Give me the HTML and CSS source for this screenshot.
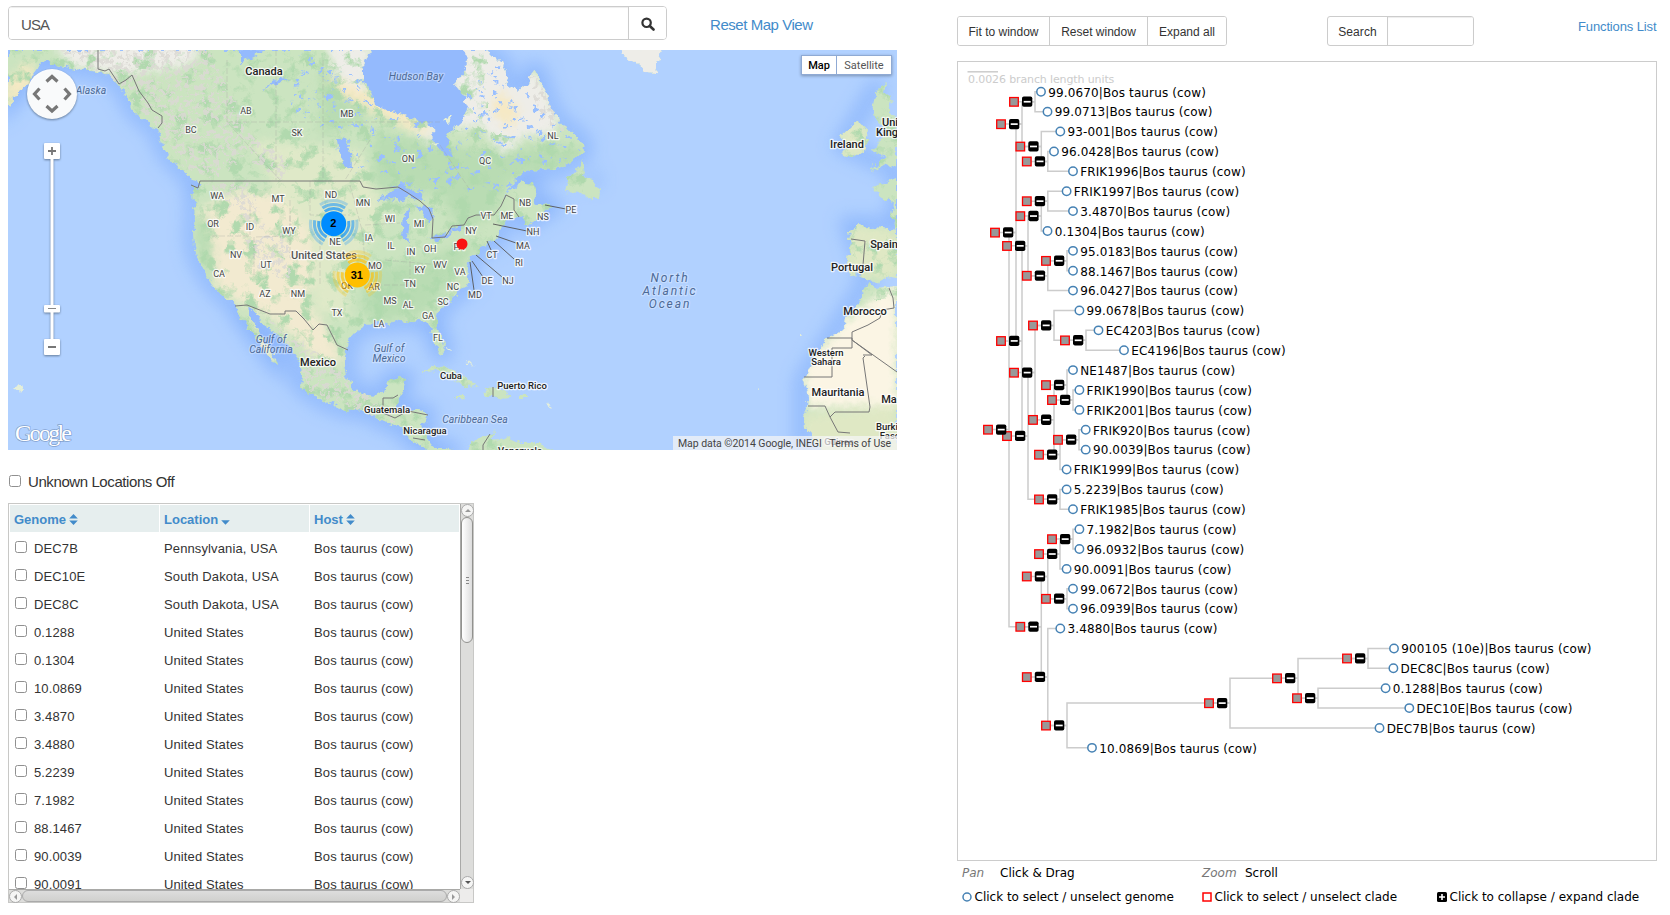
FILE: index.html
```html
<!DOCTYPE html>
<html lang="en">
<head>
<meta charset="utf-8">
<title>Genome Map</title>
<link rel="stylesheet" href="styles.css">
</head>
<body>
<div class="page">
  <div class="left">
    <div class="searchrow">
      <div class="group"><input class="query" type="text" value="USA"><button class="go" aria-label="Search"><svg width="14" height="14" viewBox="0 0 14 14"><circle cx="5.6" cy="5.8" r="4.2" fill="none" stroke="#333" stroke-width="2.2"/><path d="M8.8 9l3.7 3.5" stroke="#333" stroke-width="2.6" stroke-linecap="round"/></svg></button></div>
      <a class="reset">Reset Map View</a>
    </div>
    <div class="map">
      <svg id="map" width="889" height="400" viewBox="8 50 889 400" color-interpolation-filters="sRGB">
        <defs>
          <filter id="soft" x="-20%" y="-20%" width="140%" height="140%"><feGaussianBlur stdDeviation="5"/></filter>
          <filter id="shore" x="-10%" y="-10%" width="120%" height="120%"><feGaussianBlur stdDeviation="9"/></filter>
          <filter id="rough" x="0" y="0" width="100%" height="100%"><feTurbulence type="fractalNoise" baseFrequency=".16" numOctaves="3" seed="4" result="n"/><feDisplacementMap in="SourceGraphic" in2="n" scale="8" xChannelSelector="R" yChannelSelector="G"/></filter>
          <filter id="peaks" x="0" y="0" width="100%" height="100%"><feTurbulence type="fractalNoise" baseFrequency=".2" numOctaves="4" seed="8" result="n"/><feColorMatrix in="n" values="0 0 0 0 .86  0 0 0 0 .85  0 0 0 0 .83  9 0 0 0 -4.6" result="m"/><feComposite in="m" in2="SourceAlpha" operator="in"/></filter>
          <filter id="woods" x="0" y="0" width="100%" height="100%"><feTurbulence type="fractalNoise" baseFrequency=".07" numOctaves="4" seed="21" result="n"/><feColorMatrix in="n" values="0 0 0 0 .69  0 0 0 0 .85  0 0 0 0 .68  0 5 0 0 -2.600" result="m"/><feComposite in="m" in2="SourceAlpha" operator="in"/></filter>
          <filter id="lakes" x="0" y="0" width="100%" height="100%"><feTurbulence type="fractalNoise" baseFrequency=".13 .17" numOctaves="3" seed="33" result="n"/><feColorMatrix in="n" values="0 0 0 0 .6  0 0 0 0 .75  0 0 0 0 1  0 0 14 0 -9" result="m"/><feComposite in="m" in2="SourceAlpha" operator="in"/></filter>
          <filter id="drop" x="-30%" y="-30%" width="160%" height="160%"><feDropShadow dx="0" dy="1" stdDeviation="1.2" flood-color="#234" flood-opacity=".55"/></filter>
          <clipPath id="land"><path id="america" d="M8 50V106L16 97 23 88 30 79 37 70 41 63 47 59 52 63 60 66 76 69 92 71 103 73 112 77 118 84 123 90 128 98 131 107 138 115 147 122 157 129 160 138 163 148 168 156 175 163 182 171 191 179 200 184 199 188 193 186 194 205 195 218 193 233 194 246 197 258 203 270 210 281 217 290 224 296 231 301 235 307 240 318 247 326 254 336 260 344 267 353 274 363 278 366 276 359 270 350 263 339 257 328 251 318 247 309 253 311 259 319 264 326 276 334 286 343 296 356 301 365 302 376 301 386 309 392 321 400 336 406 346 410 355 411 363 410 372 415 381 421 391 424 401 427 407 436 413 442 421 445 430 452 458 452 446 448 434 448 428 440 423 430 422 424 427 418 427 413 418 410 408 411 398 409 396 403 401 395 406 378 400 376 390 379 385 390 375 396 362 394 353 388 347 375 345 365 347 350 348 340 355 332 365 326 378 321 385 324 393 322 400 320 410 322 420 320 428 323 433 335 437 347 442 354 445 350 443 342 438 330 436 320 438 312 447 303 455 295 463 288 470 284 468 275 467 265 470 258 478 252 480 247 490 243 498 240 497 234 502 225 510 219 521 215 527 224 540 214 553 207 548 203 537 205 534 200 536 190 530 182 522 182 510 191 504 198 514 182 524 172 540 170 555 169 567 165 577 157 584 152 583 143 575 133 563 126 555 115 549 104 545 92 538 72 533 70 528 83 518 91 508 84 505 70 502 62 493 57 486 50Z"/><path d="M584 159L577 170 566 182 564 192 582 193 592 199 599 199 600 190 593 180 583 177 584 166ZM524 225L536 213 548 208 540 217 528 226ZM422 372L433 366 445 367 456 374 467 378 477 386 466 387 454 379 438 371ZM484 389L492 387 503 390 511 396 499 399 493 396 485 396ZM456 396H467L463 399H458ZM518 396H527V398H518ZM467 452L474 440 484 436 494 431 490 441 500 440 507 437 520 443 541 443 544 447 556 452ZM620 48L626 58 636 63 646 72 655 73 657 63 662 48ZM842 134L856 122 868 128 866 147 852 158 842 156 847 145 840 140ZM872 109L876 92 886 82 884 94 892 99 889 112 897 118V168L886 163 871 172 877 162 886 157 872 151 880 142 886 132 878 121ZM873 187L885 183 897 178V234L892 218 894 204 880 196ZM849 232L857 225 897 230V278L888 277 876 283 868 279 859 274 850 275 848 260 851 245ZM869 283L875 288 897 286V452H823L812 436 804 427 803 418 807 408 808 393 804 380 811 365 820 351 827 338 838 334 845 327 846 318 855 310 860 298Z"/></clipPath>
        </defs>
        <rect x="8" y="50" width="889" height="400" fill="#b1d1ff"/>
        <g filter="url(#shore)" fill="none" stroke="#84b0fb" stroke-width="15" opacity=".8"><use href="#america"/><path d="M803 452V380L868 280 849 225 897 225V170L842 145 880 82M590 180H600"/></g>
        <g filter="url(#rough)">
          <g clip-path="url(#land)">
            <rect x="8" y="50" width="900" height="402" fill="#cbe4c0"/>
            <g filter="url(#soft)">
              <path fill="#f2ead0" d="M195 215L235 190 300 195 318 215 320 270 305 300 325 325 345 365 318 360 275 320 235 300 215 285 203 250ZM240 315L290 365 260 350Z"/>
              <path fill="#dfe9c8" d="M250 140L360 150 375 185 385 220 345 280 350 320 315 310 310 230 275 190Z"/>
              <path fill="#b9dcb3" d="M375 130L440 145 480 150 580 145 580 165 510 180 495 215 460 230 440 195 370 185ZM195 215L210 220 215 285 200 260ZM420 260L480 240 430 310 375 325 360 305 370 270ZM320 135L365 120 360 70 320 70Z"/>
              <path fill="#eeede8" d="M325 40H370L365 95 440 125 435 145 410 130 375 110 335 75ZM450 40H500L545 85 560 125 548 135 525 135 505 155 480 125 455 130ZM610 40H670V80H620ZM55 42H205L190 65 125 75 70 66Z"/>
              <path fill="#f6e9c4" d="M8 80L30 60 35 80 8 110ZM325 75L410 110 435 135 405 128 340 95ZM490 110L510 130 520 110 500 90Z"/>
              <path fill="#fbf5e4" d="M897 280V405L808 408 803 370 845 320 872 300Z"/>
              <path fill="#dfe8c4" d="M803 415L897 405V455H803ZM848 225L897 230V278L848 275ZM840 120L868 125V155L840 158Z"/>
            </g>
            <g filter="url(#woods)"><rect x="8" y="50" width="480" height="402" opacity=".99"/><path d="M480 135H600V452H480Z"/><rect x="840" y="50" width="58" height="250"/></g>
            <g filter="url(#peaks)" opacity=".85"><path d="M60 50H210L230 90 250 135 290 160 280 180 245 155 215 180 180 165 155 128 120 84ZM205 185L250 180 265 230 240 215ZM245 240L290 230 290 280 260 270ZM270 320L340 370 400 425 360 412 310 390ZM530 70L555 110 570 135 540 120Z"/></g>
            <g filter="url(#lakes)"><path d="M300 50L362 80 430 130 500 60 580 150 500 195 400 190 350 170 325 130 290 110Z"/></g>
          </g>
          <g fill="#94bafd">
            <path d="M371 48L363 68 363 82 371 90 374 104 391 111 403 114 417 121 433 126 434 143 443 155 452 157 449 146 447 137 455 127 464 119 468 107 462 94 454 84 466 70 465 48Z"/>
            <path d="M377 200L389 193 400 184 411 189 422 194 424 201 411 197 400 201 391 199ZM403 214L409 211 409 223 407 235 408 241 403 241 402 226ZM414 207L425 205 431 210 433 219 430 224 421 211ZM428 239L441 234 453 230 449 236 434 241ZM449 229L463 225 462 229 453 232ZM337 140L344 137 350 153 351 168 345 166 339 153ZM240 50H263L255 56 240 63ZM262 88L278 78 290 79 274 85ZM247 309L260 315 258 330Z"/>
          </g>
          <g fill="#e5efd9"><path d="M18 384l4 3-3 5-5-4zM443 120l8-4-2 8zM432 144l7-1-4 5zM448 347l3 3-2 2zM465 359l10 8-6-3zM547 400l4 8-3-2zM758 387l2 2-2 1zM801 333l2 3-3 0z"/></g>
        </g>
        <path class="province" d="M227 60V122L280 180M227 122H440M276 50V180M323 60V180M250 205V236H212M290 200V236L254 237V275M310 181V215H350M290 215V258H320M350 185L362 230 365 260M320 230V285M365 225L400 223M360 285H410M410 245V290M440 145L470 190M385 260L440 265M370 140L345 180"/>
        <path class="border" d="M98 50V69L105 71 109 69 119 84 126 80 132 75 139 91 148 103 152 110 162 116V123L158 128M191 185L198 188 200 181H360L363 187 376 189 398 187 408 193 420 201 429 209 433 219 432 238 445 237 452 226 464 225 468 218 476 215H494L501 206 506 195 514 199V210L519 217M235 306L247 305 270 314H285V311H296L304 319 313 330 319 324 327 325 337 345 348 350M383 413V398H393L398 395M383 413L395 418 408 411 428 415M413 438L425 440M490 434L483 445 483 452M493 387V397M897 372L852 340V332L868 325 880 318 882 310 894 308 893 298 889 288M827 338H852V348H832V377H804M865 356L863 358 870 407 869 412H835L830 417 825 406H808M852 340L872 355H863M830 417L838 432 850 433M851 239L865 241 863 265 868 270"/>
        <path class="leader" d="M545 205L566 209M493 224L527 231M496 236L516 243M487 241L491 250M494 241L514 259M476 255L502 277M472 261L483 277M470 262L474 290"/>
        <g id="labels"></g>
        <circle cx="462" cy="244" r="5.5" fill="#f91212"/>
        <g id="clusters"></g>
        <g filter="url(#drop)"><circle cx="52" cy="94" r="25" fill="#fff" fill-opacity=".96"/></g>
        <g fill="none" stroke="#777" stroke-width="3.2"><path d="M46.5 81.5L52 76.5 57.5 81.5M46.5 106L52 111 57.5 106M39.5 88.5L34.5 94 39.5 99.500M64.500 88.500L69.500 94 64.500 99.500"/></g>
        <g filter="url(#drop)" fill="#fff"><rect x="50.500" y="158" width="3" height="182"/><rect x="44" y="143" width="16" height="16" rx="1"/><rect x="44" y="305" width="16" height="7.500" rx="1"/><rect x="44" y="339" width="16" height="16" rx="1"/></g>
        <path d="M48 151H56M52 147V155M48 347H56" stroke="#777" stroke-width="1.800"/><path d="M48 308.500H56" stroke="#888"/>
        <text class="logo" x="15" y="441" textLength="57">Google</text>
      </svg>
      <div class="types"><b>Map</b><span>Satellite</span></div>
      <div class="credit"><span>Map data ©2014 Google, INEGI</span><span>Terms of Use</span></div>
    </div>
    <label class="unknown"><input type="checkbox"><span>Unknown Locations Off</span></label>
    <div class="grid">
      <div class="clip">
        <div class="row head">
          <div>Genome <svg width="9" height="11" viewBox="0 0 9 11"><path d="M4.500 0L8.800 4.600H.2ZM.2 6.400H8.800L4.500 11Z" fill="#428bca"/></svg></div>
          <div>Location <svg width="9" height="11" viewBox="0 0 9 11"><path d="M.2 6.200H8.800L4.500 10.800Z" fill="#428bca"/></svg></div>
          <div>Host <svg width="9" height="11" viewBox="0 0 9 11"><path d="M4.500 0L8.800 4.600H.2ZM.2 6.400H8.800L4.500 11Z" fill="#428bca"/></svg></div>
        </div>
        <div id="rows"></div>
      </div>
      <div class="vbar"><div class="btn"><i class="up"></i></div><div class="thumb"><i></i><i></i><i></i></div><div class="btn low"><i class="down"></i></div></div>
      <div class="hbar"><div class="btn"><i class="lt"></i></div><div class="thumb"></div><div class="btn"><i class="rt"></i></div></div>
      <div class="corner"></div>
    </div>
  </div>
  <div class="right">
    <div class="tools">
      <div class="buttons"><button>Fit to window</button><button>Reset window</button><button>Expand all</button></div>
      <div class="find"><span>Search</span><input type="text"></div>
      <a class="functions">Functions List</a>
    </div>
    <div class="tree"><svg id="tree" width="698" height="798" viewBox="958 62 698 798"></svg></div>
    <div class="hints"><em>Pan</em><span>Click &amp; Drag</span><em>Zoom</em><span>Scroll</span></div>
    <div class="legend">
      <div><svg width="10" height="10"><circle cx="5" cy="5" r="4" fill="#fff" stroke="#4682b4" stroke-width="1.500"/></svg>Click to select / unselect genome</div>
      <div><svg width="10" height="10"><rect x="1" y="1" width="8" height="8" fill="#fff" stroke="red" stroke-width="1.500"/></svg>Click to select / unselect clade</div>
      <div><svg width="10" height="10"><rect width="10" height="10" rx="1.500"/><path d="M2 5H8M5 2V8" stroke="#fff" stroke-width="1.600"/></svg>Click to collapse / expand clade</div>
    </div>
  </div>
</div>
<script src="app.js"></script>
</body>
</html>
```

FILE: styles.css
```css
* { box-sizing: border-box; }
body { margin: 0; background: #fff; color: #333; font-family: "Liberation Sans", Arial, sans-serif; }
a { color: #428bca; text-decoration: none; }
button, input { font-family: inherit; }
.page { display: flex; width: 1670px; height: 915px; overflow: hidden; }
.left { width: 957px; padding: 6px 0 0 8px; }
.right { width: 713px; }

.searchrow { display: flex; align-items: center; height: 34px; }
.group { display: flex; width: 659px; height: 34px; border: 1px solid #ccc; border-radius: 4px; overflow: hidden; }
.query { flex: 1; border: 0; padding: 3px 12px 0; font-size: 15px; letter-spacing: -.9px; color: #555; box-shadow: inset 0 1px 1px rgba(0,0,0,.075); outline: 0; }
.go { width: 38px; border: 0; border-left: 1px solid #ccc; background: #fff; padding: 5px 0 0; }
.reset { margin-left: 43px; padding-top: 2px; font-size: 15px; letter-spacing: -.45px; }

.map { position: relative; width: 889px; height: 400px; margin-top: 10px; overflow: hidden; }
.map svg { display: block; }
.map text { font-family: Roboto, sans-serif; paint-order: stroke; stroke: #fff; stroke-opacity: .75; stroke-width: 2.5px; stroke-linejoin: round; text-anchor: middle; }
.map .st { font-size: 9px; fill: #444; }
.map .co { font-size: 11px; font-weight: 500; fill: #222; }
.map .sm { font-size: 9.5px; font-weight: 500; fill: #222; }
.map .us { font-size: 11px; font-weight: 500; fill: #555; }
.map .sea { font-size: 10.5px; font-style: italic; fill: #4d6a96; stroke-opacity: .3; }
.map .ocean { font-size: 12px; font-style: italic; fill: #4d6a96; letter-spacing: 1.9px; stroke-opacity: .3; }
.map .num { font: bold 11px "Liberation Sans", sans-serif; fill: #000; stroke: none; }
.map .logo { font: 24px "Liberation Serif", serif; fill: #fff; stroke: #6d8bb8; stroke-opacity: .7; stroke-width: 1.5px; text-anchor: start; }
.border { fill: none; stroke: #777; stroke-width: 1; }
.leader { fill: none; stroke: #555; stroke-width: .9; }
.province { fill: none; stroke: #9a9a9a; stroke-opacity: .4; stroke-width: .7; stroke-dasharray: 6 2; }
.types { position: absolute; top: 5px; right: 5px; display: flex; height: 20px; border: 1px solid #8faad4; background: #fff; font: 11px/19px Roboto, sans-serif; box-shadow: 0 1px 3px rgba(0,0,0,.3); }
.types b { width: 34px; text-align: center; color: #000; font-weight: 500; }
.types span { width: 55px; text-align: center; border-left: 1px solid #8faad4; color: #555; }
.credit { position: absolute; right: 0; bottom: 0; width: 224px; height: 14px; padding: 1px 6px 0 5px; display: flex; justify-content: space-between; background: rgba(245,245,245,.72); font: 10.5px/14px Roboto, sans-serif; letter-spacing: -.06px; color: #444; white-space: nowrap; }

input[type=checkbox] { appearance: none; width: 12px; height: 12px; margin: 0; border: 1px solid #909090; border-radius: 2.5px; background: #fff; flex: none; }
.unknown { display: flex; align-items: center; height: 20px; margin: 21px 0 0 1px; gap: 7px; font-size: 15px; letter-spacing: -.41px; }

.grid { display: grid; grid-template: 385px 13px / 451px 13px; width: 466px; height: 400px; margin-top: 12px; border: 1px solid #c8c8c6; }
.clip { overflow: hidden; padding: 1px 1px 0; }
.row { display: grid; grid-template-columns: repeat(3, 149px); column-gap: 1px; height: 28px; font-size: 13px; letter-spacing: .12px; }
.row > div { padding-left: 4px; display: flex; align-items: center; white-space: nowrap; }
.row input { margin: -3px 7px 0 1px; }
.head { height: 27px; margin-bottom: 2px; font-weight: bold; color: #428bca; letter-spacing: 0; }
.head > div { background: #e6eeee; padding-top: 2px; gap: 3px; }
.vbar, .hbar { display: flex; background: #dddddb; border: 0 solid #a9a9a7; }
.vbar { flex-direction: column; border-left-width: 1px; }
.hbar { border-top-width: 1px; }
.btn { display: flex; align-items: center; justify-content: center; flex: none; width: 13px; height: 13px; border: 1px solid #aaa; border-radius: 7px; background: #f5f5f4; }
.thumb { border: 1px solid #92928f; border-radius: 7px; }
.vbar .thumb { height: 126px; background: linear-gradient(90deg, #fff, #ddd); display: flex; flex-direction: column; align-items: center; justify-content: center; gap: 2px; }
.thumb i { width: 3px; height: 1px; background: #888; }
.vbar .low { margin-top: auto; }
.hbar .thumb { flex: 1; background: linear-gradient(#ddd, #d0d0ce); border-color: #aaa; }
.btn i { border: 3px solid transparent; }
.btn .up { border-top: 0; border-bottom-color: #999; }
.btn .down { border-bottom: 0; border-top-color: #555; }
.btn .lt { border-left: 0; border-right-color: #999; }
.btn .rt { border-right: 0; border-left-color: #999; }
.corner { background: #edeceb; }

.tools { display: flex; align-items: flex-start; height: 61px; padding-top: 16px; }
.buttons, .find { display: flex; height: 30px; border: 1px solid #ccc; border-radius: 3px; overflow: hidden; font-size: 12px; }
.buttons { width: 270px; }
.buttons button { border: 0; border-right: 1px solid #ccc; padding: 1px 0 0; background: #fff; color: #333; font-size: 12px; width: 92px; }
.buttons button:nth-child(2) { width: 98px; }
.buttons button:last-child { border-right: 0; width: 78px; }
.find { width: 147px; margin-left: 100px; }
.find span { width: 60px; text-align: center; line-height: 30px; border-right: 1px solid #ccc; letter-spacing: .1px; }
.find input { width: 85px; border: 0; box-shadow: inset 0 1px 1px rgba(0,0,0,.075); }
.functions { width: 79px; margin: 3px 0 0 104px; font-size: 13px; letter-spacing: -.13px; white-space: nowrap; }

.tree { width: 700px; height: 800px; border: 1px solid #ccc; }
.tree svg { display: block; }
.tree path { fill: none; stroke: #ccc; stroke-width: 1.5; }
.tree text { font: 12px "DejaVu Sans", sans-serif; fill: #000; letter-spacing: .13px; }
.tree .scale { font-size: 11px; fill: #ccc; letter-spacing: -.12px; }
.tree .minus { stroke: #fff; stroke-width: 1.7; }
.hints, .legend { font: 12px/16px "DejaVu Sans", sans-serif; color: #000; }
.hints { display: grid; grid-template-columns: 38px 202px 43px 100px; padding-left: 5px; margin-top: 4px; }
.hints em { color: #777; }
.legend { display: grid; grid-template-columns: 240px 235px 220px; padding-left: 5px; margin-top: 8px; white-space: nowrap; }
.legend div { display: flex; align-items: center; gap: 2.5px; }
```

FILE: app.js
```js
const H = " (cow)";
const rows = [["DEC7B", "Pennsylvania, USA"], ["DEC10E", "South Dakota, USA"], ["DEC8C", "South Dakota, USA"]].concat(
  ["0.1288", "0.1304", "10.0869", "3.4870", "3.4880", "5.2239", "7.1982", "88.1467", "90.0039", "90.0091"].map(g => [g, "United States"]));
document.getElementById("rows").innerHTML = rows.map(r =>
  `<div class="row"><div><input type="checkbox">${r[0]}</div><div>${r[1]}</div><div>Bos taurus${H}</div></div>`).join("");

// Map labels: class, then "text,x,baseline" entries
const labels = {
  st: "AB,246,114|BC,191,133|SK,297,136|MB,347,117|ON,408,162|QC,485,164|NL,553,139|WA,217,199|MT,278,202|ND,331,198|MN,363,206|OR,213,227|ID,250,230|WY,289,234|WI,390,222|MI,419,227|VT,486,219|ME,507,219|NB,525,206|PE,571,213|NS,543,220|NY,471,234|NH,533,235|MA,523,249|CT,492,258|RI,519,266|PA,459,250|NE,335,245|IA,369,241|IL,391,249|IN,411,255|OH,430,252|NV,236,258|UT,266,268|CA,219,277|AZ,265,297|NM,298,297|MO,375,269|KY,420,273|WV,440,268|VA,460,275|TN,410,287|NC,453,290|OK,347,289|AR,374,290|MS,390,304|AL,408,308|SC,443,305|TX,337,316|LA,379,327|GA,428,319|FL,438,341|DE,487,284|NJ,508,284|MD,475,298",
  co: "Canada,264,75|Mexico,318,366|Ireland,847,148|Uni,890,126|King,887,136|Spain,884,248|Portugal,852,271|Morocco,865,315|Mauritania,838,396|Ma,889,403",
  sm: "Cuba,451,379|Puerto Rico,522,389|Guatemala,387,413|Nicaragua,425,434|Western,826,356|Sahara,826,365|Burki,887,430|Faso,890,439|Venezuela,520,454|Guinea,839,445",
  us: "United States,324,259",
  sea: "Alaska,91,94|Hudson Bay,416,80|Gulf of,271,343|California,271,353|Gulf of,389,352|Mexico,389,362|Caribbean Sea,475,423",
  ocean: "North,670,282|Atlantic,670,295|Ocean,670,308"
};
document.getElementById("labels").innerHTML = Object.entries(labels).map(([c, s]) =>
  s.split("|").map(e => { const [t, x, y] = e.split(","); return `<text class="${c}" x="${x}" y="${y}">${t}</text>`; }).join("")).join("");

const arc = (x, y, r, a, b) => {
  const p = d => `${x + r * Math.cos(d * Math.PI / 180)} ${y + r * Math.sin(d * Math.PI / 180)}`;
  return `M${p(a)}A${r} ${r} 0 0 1 ${p(b)}`;
};
const cluster = (x, y, n, color) => [[15.2, .65], [19.3, .5], [23.3, .25]].map(([r, o]) =>
  `<path d="${[-126, -10, 118].map(a => arc(x, y, r, a, a + 72)).join("")}" fill="none" stroke="${color}" stroke-width="3" opacity="${o}"/>`).join("") +
  `<circle cx="${x}" cy="${y}" r="12.5" fill="${color}"/><text class="num" x="${x - .5}" y="${y + 3.5}">${n}</text>`;
document.getElementById("clusters").innerHTML = cluster(333.7, 223.7, 2, "#008cff") + cluster(357.3, 275, 31, "#ffbf00");

// Leaves: [name, circle x]; clades: [button x, first child, second child]
const L = (name, x) => ({ name, x }), C = (x, a, b) => ({ x, kids: [a, b] });
const root = C(1001,
  C(1008,
    C(1014,
      C(1027, L("99.0670", 1041), L("99.0713", 1047.5)),
      C(1033.300, L("93-001", 1060.300), C(1039.800, L("96.0428", 1054), L("FRIK1996", 1073)))),
    C(1014,
      C(1020,
        C(1033.300, C(1039.800, L("FRIK1997", 1066.600), L("3.4870", 1073)), L("0.1304", 1047.5)),
        C(1039.800, C(1059, L("95.0183", 1073), L("88.1467", 1073)), L("96.0427", 1073))),
      C(1020,
        C(1027,
          C(1046, L("99.0678", 1079.400), C(1078, L("EC4203", 1098.500), L("EC4196", 1124))),
          C(1046,
            C(1059, L("NE1487", 1073), C(1065, L("FRIK1990", 1079.400), L("FRIK2001", 1079.400))),
            C(1052, C(1071, L("FRIK920", 1085.700), L("90.0039", 1085.700)), L("FRIK1999", 1066.600)))),
        C(1052, L("5.2239", 1066.600), L("FRIK1985", 1073))))),
  C(1033.300,
    C(1039.800,
      C(1052, C(1065, L("7.1982", 1079.400), L("96.0932", 1079.400)), L("90.0091", 1066.600)),
      C(1059, L("99.0672", 1073), L("96.0939", 1073))),
    C(1039.800, L("3.4880", 1060.300),
      C(1059,
        C(1222,
          C(1290, C(1360, L("900105 (10e)", 1394), L("DEC8C", 1393.400)), C(1310, L("0.1288", 1385.600), L("DEC10E", 1409.300))),
          L("DEC7B", 1379.500)),
        L("10.0869", 1092)))));
let leaf = 0, lines = "", marks = "";
const place = n => {
  if (!n.kids) {
    n.y = 91.8 + 19.88 * leaf++; n.join = n.x - 4;
    marks += `<circle cx="${n.x}" cy="${n.y}" r="4.200" fill="#fff" stroke="#4682b4" stroke-width="1.500"/><text x="${n.x + 7.2}" y="${n.y + 4.8}">${n.name}|Bos taurus${H}</text>`;
    return;
  }
  n.kids.forEach(place);
  const [a, b] = n.kids;
  n.y = (a.y + b.y) / 2; n.join = n.x + 8;
  lines += `<path d="M${a.join} ${a.y}H${n.join}V${b.y}H${b.join}M${n.x - 13} ${n.y}H${n.join}"/>`;
  marks += `<rect x="${n.x - 17.3}" y="${n.y - 4.2}" width="8.600" height="8.600" fill="#999" stroke="red" stroke-width="1.300"/><rect x="${n.x - 5}" y="${n.y - 5.2}" width="10.300" height="10.300" rx="1.800"/><path class="minus" d="M${n.x - 3.3} ${n.y}h7"/>`;
};
place(root);
document.getElementById("tree").innerHTML = `<path d="M967.500 71.800H998"/><text class="scale" x="968" y="83">0.0026 branch length units</text>` + lines + marks;
```
